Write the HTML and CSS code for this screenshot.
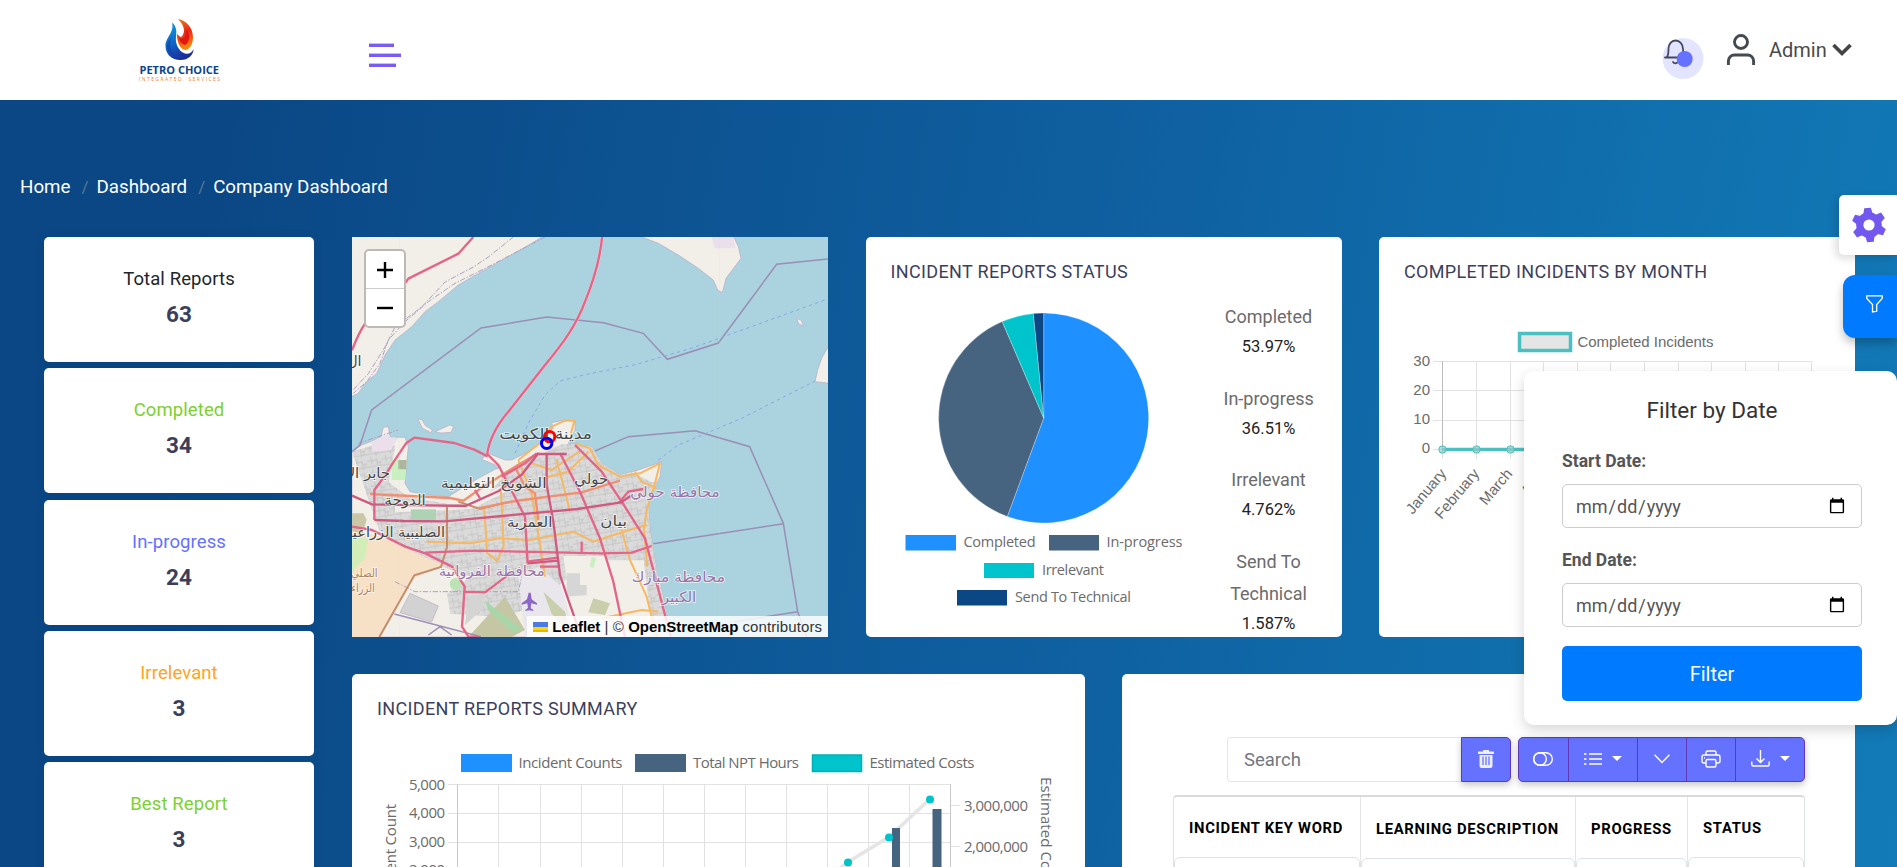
FILE: index.html
```html
<!DOCTYPE html>
<html lang="en">
<head>
<meta charset="utf-8">
<title>Company Dashboard</title>
<link rel="stylesheet" href="styles.css">
</head>
<body>
<header class="topbar">
  <div class="brand">
    <svg width="90" height="72" viewBox="135 14 90 72">
      <defs>
        <linearGradient id="blue" x1="0" y1="0" x2="0.4" y2="1"><stop offset="0" stop-color="#1aa0e0"/><stop offset=".5" stop-color="#0f6fce"/><stop offset="1" stop-color="#1b2f9b"/></linearGradient>
        <linearGradient id="red" x1="0" y1="0" x2="0.2" y2="1"><stop offset="0" stop-color="#f08010"/><stop offset=".5" stop-color="#e8281a"/><stop offset="1" stop-color="#f28a0a"/></linearGradient>
      </defs>
      <path fill="url(#blue)" d="M172 22.500c4 3 5 8 4 14-1 8 3 15 9 17 4 1 7-1 8.500-4.500 0 6-5 11-13 11-9 0-15-6-15-14 0-9 9-13 6.500-23.500z"/>
      <path fill="#173fa8" opacity=".65" d="M174 32c-3 6-5 11-3 17 2 5 8 9 16 7-8 5-20 0-20-10 0-6 5-8 7-14z"/>
      <path fill="url(#red)" d="M178 19c8 1 15 9 15 18 0 7-3 12-7 13-5 0-9-6-9-16 2 2 3 3 4 3 4-3 5-10-3-18z"/>
      <path fill="#e31712" d="M186 29c5 5 4 13-1 16-3-1-5-3-6-7 5 2 7-3 7-9z"/>
      <text class="logo-name" x="139.500" y="74" textLength="79.500" lengthAdjust="spacingAndGlyphs">PETRO CHOICE</text>
      <text class="logo-sub" x="139" y="81" textLength="81">INTEGRATED&#160; SERVICES</text>
    </svg>
  </div>
  <button class="burger" aria-label="Menu"><span></span><span></span><span></span></button>
  <div class="account">
    <div class="bell">
      <svg width="42" height="42" viewBox="0 0 42 42">
        <circle cx="21" cy="21.500" r="20.500" fill="#e3e4ff"/>
        <g fill="none" stroke="#46485f" stroke-width="1.800" stroke-linecap="round"><path d="M3 20.500h20M5 20c1.500-2 1.500-4 1.500-8 0-5 3-8.500 7-8.500s7.500 3.500 7.500 8.500c0 4 .5 6 1.500 8M11 25c1 1.500 3 1.500 4.500.500"/></g>
        <circle cx="22.700" cy="22" r="8" fill="#6571ff"/>
      </svg>
    </div>
    <svg class="user" width="30" height="34" viewBox="0 0 30 34" fill="none" stroke="#454950" stroke-width="2.900"><circle cx="15" cy="9" r="6.500"/><path d="M2.400 32v-4a6 6 0 0 1 6-6h13.200a6 6 0 0 1 6 6v4"/></svg>
    <span class="admin">Admin</span>
    <svg class="caret" width="20" height="14" viewBox="0 0 20 14" fill="none" stroke="#444" stroke-width="3.600"><path d="M1.500 2l8.500 8.500L18.500 2"/></svg>
  </div>
</header>
<main class="page">
  <nav class="crumbs"><a>Home</a><i>/</i><a>Dashboard</a><i>/</i><a>Company Dashboard</a></nav>
  <div class="board">
    <section class="stats">
      <div class="stat"><span class="dark">Total Reports</span><b>63</b></div>
      <div class="stat"><span class="green">Completed</span><b>34</b></div>
      <div class="stat"><span class="violet">In-progress</span><b>24</b></div>
      <div class="stat"><span class="orange">Irrelevant</span><b>3</b></div>
      <div class="stat"><span class="green">Best Report</span><b>3</b></div>
    </section>
    <div class="content">
      <div class="row">
        <section class="map">
          <svg class="tiles" width="476" height="400" viewBox="21 21 1428 1200">
            <defs>
              <pattern id="streets" width="44" height="38" patternUnits="userSpaceOnUse" patternTransform="rotate(-9)"><path d="M0 12h30M14 0v24M30 6v32M0 30h44M30 19h14M38 19v11" fill="none" stroke="#bdbdbd" stroke-width="2"/></pattern>
              <path id="land" d="M21 665L50 645 85 632 108 620 115 592 130 590 135 622 180 622 190 650 185 700 180 760 195 785 250 795 310 800 350 775 400 745 450 718 468 712 410 688 430 670 480 690 500 690 550 665 585 640 600 610 625 595 620 578 660 570 690 572 690 600 670 640 740 650 770 700 825 735 880 720 950 695 945 740 925 780 910 830 915 900 925 960 935 1020 950 1080 978 1221H21z"/>
              <path id="urban" d="M21 665l90-28 40 10-20 110 60 45 120 20h90l90-100 100-50 60-30h120l60 70 90 45 115-28-25 80-15 60 10 110 20 110 40 152h-140l-30-250-150 0-100 70-30 40-80 40-60 20-160-10-10-60 70-50-190-70-80-60z"/>
              <clipPath id="landclip"><use href="#land"/></clipPath>
            </defs>
            <rect x="21" y="21" width="1428" height="1200" fill="#aad3df"/>
            <g fill="#f2efe9" stroke="#b9a9c2" stroke-width="2">
              <path d="M15 15H600L560 40 490 80 400 130 340 165 280 215 240 245 200 290 150 330 120 375 95 430 60 460 40 490 15 502z"/>
              <path d="M875 15L940 40 1000 75 1060 115 1105 150 1118 180 1132 188 1143 145 1188 85 1180 50 1163 15z"/>
              <path d="M1455 340L1430 385 1418 420 1410 455 1455 460z"/>
              <path d="M1355 265l14 6 6 18-14-8z"/>
              <path d="M218 566l14 4 8 16 22 14-4 8-26-14zM270 605l44-20 12 4-8 18-30 2z"/>
              <use href="#land"/>
            </g>
            <path d="M1100 21h64l8 34h-64z" fill="#eadfea"/>
            <g clip-path="url(#landclip)">
              <use href="#urban" fill="#dadada"/>
              <use href="#urban" fill="url(#streets)"/>
              <path d="M150 815l200 12 120-60 10 20-100 50-230 10z" fill="#f2efe9"/>
              <path d="M370 1100l50-10-10 50-50 45z" fill="#d4d4d4"/>
              <path d="M21 900l85 20 130 60 60 25-90 40-105 176H21z" fill="#f7e1c6"/>
              <path d="M21 925h50l-12 60-38 40z" fill="#d3edb8"/>
              <path d="M21 850h34l10 20-12 40-32-6z" fill="#c9c7a6"/>
              <path d="M78 630l50-15 30 10-20 35-55 5z" fill="#eadfea"/>
              <path d="M140 690h45v60h-45z" fill="#c9f0c0"/><path d="M160 690h25v28h-25z" fill="#aab69d"/>
              <path d="M198 838h75v38h-75z" fill="#aed2b4"/>
              <path d="M655 978h130l44 243H690z" fill="#f2efe9"/>
              <path d="M520 1040l60-30 70 60 40 151h-150z" fill="#e9e7eb"/>
              <path d="M665 1030h40v35h20v30l-60 5z" fill="#d6d6d6"/><path d="M745 1105l50 15-15 35-50-8z" fill="#c9ceac"/><path d="M595 1085l65 60 20 76-60-70z" fill="#c9ceac"/>
              <path d="M480 1100l60 100-40 21H370z" fill="#c5c7a4"/><path d="M420 1112l110 85-25 12-75-68z" fill="#a9d6a8"/>
              <path d="M195 1090l85 38-20 48-95-28z" fill="#d2d2d2" stroke="#b9a9c2" stroke-width="2"/>
              <circle cx="332" cy="1062" r="18" fill="#bce3b4"/>
              <path d="M740 980l14 4-8 30-12-4z" fill="#c9f0c0"/>
            </g>
            <g fill="none" stroke="#aca0c2" stroke-width="3" stroke-dasharray="16 5 4 5"><path d="M505 21l-75 60-45 30-85 45-70 75-80 60-30 60-50 80-45 48M600 21L440 105 330 160 250 215 180 275 130 330 105 400 65 455 25 490"/><path d="M150 1055l60 30h310l10-45M40 640l120-40"/></g>
            <g fill="none" stroke="#9b8eb4" stroke-width="4.500"><path d="M21 665L45 645 80 540 408 294 605 261 775 278 895 310 967 388 1120 339 1295 103 1449 87"/><path d="M750 663L850 620 1050 602 1214 650 1315 880 1358 1145 1385 1221M925 941L1315 881M1170 1175L1358 1145M148 1152l260 68M250 1215l35-25 35 25"/></g>
            <g fill="none" stroke="#8aa7e8" stroke-width="3" stroke-dasharray="10 10"><path d="M510 670l40-90 50-85 45-42 80-20 150-30 170-50 400-145M940 690l60-45 190-80 220-112"/></g>
            <g fill="none" stroke="#f6b863" stroke-width="6" stroke-linejoin="round">
              <path d="M520 690l70-55 30-45 40-18 28 0-10 38M690 640l45 15 25 50 65 35 60-10 60-30-15 60-25 80-8 60 10 110M245 935l130 5 90-15 90 5 130-25 60 30 60-20 100-30M418 838l8 130 30 25 20-45-8-165M520 690l40 100 20 120 20 130M635 690l20 75 20 80M560 700l60 20 90-60M590 745l80-20 60-60M830 900l25 90 50 110 30 121M870 725l20 30 45 20M770 1165l120-25 50 5"/>
            </g>
            <g fill="none" stroke="#c58d69" stroke-width="6"><path d="M103 1221l105-185 80-25 18-60V830M340 815l65 22 80-20"/></g>
            <g fill="none" stroke="#ef9070" stroke-width="7"><path d="M75 792l240 12 40 8 50-35 110-70 60-35M400 835l110-22 200-26 115-35"/><path d="M510 710l30 60 30 20 10 80"/></g>
            <g fill="none" stroke="#f7c9d3" stroke-width="9"><path d="M772 15C768 60 757 125 720 215 695 285 650 345 600 405L490 545C450 590 430 640 427 672"/></g>
            <g fill="none" stroke="#e46587" stroke-width="7" stroke-linejoin="round">
              <path d="M772 15C768 60 757 125 720 215 695 285 650 345 600 405L490 545C450 590 430 640 427 672L460 705 540 860 548 1000M385 21l-45 50-150 75-60 85-70 50q-20 30-39 80"/>
              <path d="M88 870V780l30-40 25-40 40-60 25-17 120 16 60 20 40 20M390 780l15 25"/>
              <path d="M21 890l60 10 100 50 60 20 80 40 38 60-8 120 20 31h30M240 968l150-6 380 8 90-2 60-20M545 995l95-12M360 1085l60 2 80-60M585 1010h55"/>
              <path d="M690 645l80 80 60 90 70 110 60 230 18 66M645 670l60 115 60 140 40 130 35 166M820 820l30-35 45-8M710 935v35"/>
              <path d="M470 740l70-40 35-30"/>
            </g>
            <g fill="none" stroke="#cf5a80" stroke-width="7"><path d="M21 797l60 26 280 5 100-45 70-50 50-65M88 870l90 3 120 1 400-37 130-20 30-20M605 675v90l20 110 20 160 20 60 35 100M575 672h90M548 1000l90-8"/></g>
            <g fill="none" stroke="#d3d3d3" stroke-width="1" opacity=".5"><path d="M163 21v1200M1123 21v1200"/></g>
            <path fill="#8c67c7" d="M551 1088l6 0 3 20 16 12v4l-17-4-2 14 8 6v3l-12-2-12 2v-3l8-6-2-14-17 4v-4l16-12z"/>
            <g class="places" text-anchor="middle">
              <text x="602" y="628" font-size="44" textLength="278" lengthAdjust="spacingAndGlyphs">مدينة الكويت</text>
              <text x="446" y="773" font-size="43" textLength="318" lengthAdjust="spacingAndGlyphs">الشويخ التعليمية</text>
              <text x="739" y="763" font-size="43" textLength="102" lengthAdjust="spacingAndGlyphs">حولي</text>
              <text x="180" y="826" font-size="43" textLength="124" lengthAdjust="spacingAndGlyphs">الدوحة</text>
              <text x="554" y="890" font-size="43" textLength="136" lengthAdjust="spacingAndGlyphs">العمرية</text>
              <text x="806" y="888" font-size="43" textLength="80" lengthAdjust="spacingAndGlyphs">بيان</text>
              <text x="150" y="922" font-size="43" textLength="300" lengthAdjust="spacingAndGlyphs">الصليبية الزراعية</text>
              <text x="70" y="745" font-size="43" textLength="130" lengthAdjust="spacingAndGlyphs">جابر الأ</text>
              <text x="28" y="408" font-size="43">ال</text>
              <g class="region"><text x="990" y="802" font-size="43" textLength="268" lengthAdjust="spacingAndGlyphs">محافظة حولي</text><text x="440" y="1038" font-size="43" textLength="318" lengthAdjust="spacingAndGlyphs">محافظة الفروانية</text><text x="1000" y="1056" font-size="43" textLength="280" lengthAdjust="spacingAndGlyphs">محافظة مبارك</text><text x="1002" y="1116" font-size="43" textLength="104" lengthAdjust="spacingAndGlyphs">الكبير</text></g>
              <g class="farm"><text x="58" y="1042" font-size="36" textLength="80" lengthAdjust="spacingAndGlyphs">الصلي</text><text x="54" y="1087" font-size="36" textLength="70" lengthAdjust="spacingAndGlyphs">الزراء</text></g>
            </g>
            <circle cx="614" cy="620" r="15.500" fill="none" stroke="red" stroke-width="9"/>
            <circle cx="605" cy="640" r="15.500" fill="none" stroke="#0000f0" stroke-width="9"/>
          </svg>
          <div class="zoomer"><span><svg width="16" height="16" viewBox="0 0 16 16"><path d="M0 8h16M8 0v16"/></svg></span><span><svg width="16" height="16" viewBox="0 0 16 16"><path d="M0 8h16"/></svg></span></div>
          <div class="credit"><svg width="15" height="10" viewBox="0 0 15 10"><path fill="#4c7be1" d="M0 0h15v5H0z"/><path fill="#ffd500" d="M0 5h15v3H0z"/><path fill="#e0bc00" d="M0 8h15v2H0z"/></svg> <b>Leaflet</b> | © <b>OpenStreetMap</b> contributors</div>
        </section>
        <section class="card">
          <h2>INCIDENT REPORTS STATUS</h2>
          <div class="pie">
            <svg width="330" height="320" viewBox="880 305 330 320">
              <g stroke="#fff" stroke-opacity=".35" stroke-width=".8">
                <path fill="#1e90ff" d="M1043.700 418V313A105 105 0 1 1 1007.300 516.500z"/>
                <path fill="#46637f" d="M1043.700 418L1007.300 516.500A105 105 0 0 1 1002.200 321.500z"/>
                <path fill="#00c4cc" d="M1043.700 418L1002.200 321.500A105 105 0 0 1 1033.400 313.500z"/>
                <path fill="#0b4785" d="M1043.700 418L1033.400 313.500A105 105 0 0 1 1043.700 313z"/>
              </g>
              <path fill="#1e90ff" d="M905.500 535h50.500v15.500h-50.500z"/><path fill="#46637f" d="M1049 535h50v15.500h-50z"/><path fill="#00c4cc" d="M984 563h50v15h-50z"/><path fill="#0b4785" d="M957 590h50v15.500h-50z"/>
              <g class="segoe"><text x="963.500" y="547" textLength="72">Completed</text><text x="1106.500" y="547" textLength="76">In-progress</text><text x="1042" y="575" textLength="62">Irrelevant</text><text x="1015" y="602" textLength="116">Send To Technical</text></g>
            </svg>
            <dl class="shares">
              <dt>Completed</dt><dd>53.97%</dd>
              <dt>In-progress</dt><dd>36.51%</dd>
              <dt>Irrelevant</dt><dd>4.762%</dd>
              <dt>Send To<br>Technical</dt><dd>1.587%</dd>
            </dl>
          </div>
        </section>
        <section class="card">
          <h2>COMPLETED INCIDENTS BY MONTH</h2>
          <svg class="monthly" width="476" height="230" viewBox="1379 305 476 230">
            <rect x="1519.500" y="333.500" width="51" height="17" fill="#e5e5e5" stroke="#4bc0c0" stroke-width="3.500"/>
            <text x="1577.500" y="346.500" textLength="136">Completed Incidents</text>
            <path fill="none" stroke="#e2e2e2" stroke-width="1" d="M1433 361.500h379M1433 390.500h379M1433 420.500h379M1433 449.500h379M1442.500 449v10M1476.500 361v98M1510.500 361v98M1543.500 361v98M1577.500 361v98M1610.500 361v98M1644.500 361v98M1678.500 361v98M1711.500 361v98M1745.500 361v98M1778.500 361v98M1811.500 361v98"/>
            <path stroke="#bbb" d="M1442.500 361v88"/>
            <path stroke="#4bc0c0" stroke-width="3.500" d="M1442 449.500h120"/>
            <g fill="#9cc" fill-opacity=".7" stroke="#4bc0c0"><circle cx="1442.500" cy="449.500" r="3.700"/><circle cx="1476.500" cy="449.500" r="3.700"/><circle cx="1510.500" cy="449.500" r="3.700"/></g>
            <g text-anchor="end"><text x="1430" y="366">30</text><text x="1430" y="395">20</text><text x="1430" y="424">10</text><text x="1430" y="453">0</text>
            <text transform="translate(1447 474) rotate(-50)">January</text><text transform="translate(1480 474) rotate(-50)">February</text><text transform="translate(1513 474) rotate(-50)">March</text><text transform="translate(1547 474) rotate(-50)">April</text></g>
          </svg>
        </section>
      </div>
      <div class="row lower">
        <section class="card">
          <h2>INCIDENT REPORTS SUMMARY</h2>
          <svg class="summary" width="733" height="125" viewBox="352 742 733 125">
            <path fill="#1e90ff" d="M461 754h51v18h-51z"/><path fill="#46637f" d="M635 754h51v18h-51z"/>
            <path fill="#00c4cc" stroke="#00b0b8" stroke-width="1.500" d="M812.500 755h49v16.500h-49z"/>
            <g class="segoe big"><text x="518.500" y="768" textLength="104">Incident Counts</text><text x="693" y="768" textLength="106">Total NPT Hours</text><text x="869.500" y="768" textLength="105">Estimated Costs</text></g>
            <path fill="none" stroke="#e2e2e2" d="M448 784.500h503M448 813.500h503M448 842.500h503M498.500 784v90M540.500 784v90M581.500 784v90M622.500 784v90M663.500 784v90M704.500 784v90M745.500 784v90M786.500 784v90M827.500 784v90M868.500 784v90M909.500 784v90M951 805.500h9M951 846.500h9"/>
            <path stroke="#c9c9c9" d="M457.500 784v90M950.500 784v90"/>
            <path fill="none" stroke="#e5e5e5" stroke-width="3.500" d="M800 900L848 862 889 837 930 799"/>
            <path fill="#46637f" d="M892 828h8v50h-8zM932.500 809h9v70h-9z"/>
            <g fill="#00c4cc"><circle cx="848" cy="862.500" r="4"/><circle cx="889" cy="837.500" r="4"/><circle cx="930" cy="799.500" r="4"/></g>
            <g class="segoe big"><text x="409" y="790" textLength="36">5,000</text><text x="409" y="818" textLength="36">4,000</text><text x="409" y="847" textLength="36">3,000</text><text x="409" y="875" textLength="36">2,000</text><text x="964" y="811" textLength="64">3,000,000</text><text x="964" y="852" textLength="64">2,000,000</text>
            <text transform="translate(396 904) rotate(-90)" textLength="100">Incident Count</text><text transform="translate(1041 777) rotate(90)" textLength="113">Estimated Costs</text></g>
          </svg>
        </section>
        <section class="card table-card">
          <div class="tools">
            <div class="search">Search</div>
            <div class="btns trash"><span class="b50"><svg width="16" height="18" viewBox="0 0 16 18" fill="#eef"><path d="M5 0h6v1.500h5V4H0V1.500h5z"/><path d="M1.500 5h13V16q0 2-2 2h-9q-2 0-2-2z"/><path stroke="#6571ff" stroke-width="1.300" d="M5 6.500v8.500M8 6.500v8.500M11 6.500v8.500"/></svg></span></div>
            <div class="btns group">
              <span class="b49"><svg width="20" height="14" viewBox="0 0 20 14"><rect x=".7" y=".7" width="18.600" height="12.600" rx="6.300"/><circle cx="7" cy="7" r="6.300"/></svg></span>
              <span class="b69"><svg width="18" height="14" viewBox="0 0 18 14"><path d="M5 2h13M5 7h13M5 12h13M0 2h2.500M0 7h2.500M0 12h2.500"/></svg><i></i></span>
              <span class="b50"><svg width="16" height="10" viewBox="0 0 16 10"><path d="M.5.700L8 8.500 15.500.700"/></svg></span>
              <span class="b49"><svg width="20" height="18" viewBox="0 0 20 18"><path d="M5 5V2.500q0-1.500 1.500-1.500h7Q15 1 15 2.500V5M5 13H3q-2 0-2-2V7q0-2 2-2h14q2 0 2 2v4q0 2-2 2h-2M3 8h1"/><rect x="5" y="9.500" width="10" height="7.500" rx="1.500"/></svg></span>
              <span class="b69"><svg width="19" height="17" viewBox="0 0 19 17"><path d="M9.500 0v12.500M5.500 8.500l4 4 4-4M.8 11.500v3q0 1.500 1.500 1.500h14.400q1.500 0 1.500-1.500v-3"/></svg><i></i></span>
            </div>
          </div>
          <div class="grid">
            <div class="col c1"><b>INCIDENT KEY WORD</b><div></div></div>
            <div class="col c2"><b>LEARNING DESCRIPTION</b><div></div></div>
            <div class="col c3"><b>PROGRESS</b><div></div></div>
            <div class="col c4"><b>STATUS</b><div></div></div>
          </div>
        </section>
      </div>
    </div>
  </div>
</main>
<button class="gear" aria-label="Settings"><svg width="36" height="36" viewBox="-18 -18 36 36"><g fill="#7358f0" transform="rotate(-5)"><circle r="12.800"/><path id="tooth" d="M-4.600-11.500L-3.300-17h6.600l1.300 5.500z"/><use href="#tooth" transform="rotate(60)"/><use href="#tooth" transform="rotate(120)"/><use href="#tooth" transform="rotate(180)"/><use href="#tooth" transform="rotate(240)"/><use href="#tooth" transform="rotate(300)"/></g><circle r="5.600" fill="#fff"/></svg></button>
<button class="funnel" aria-label="Filter"><svg width="17" height="18" viewBox="0 0 17 18" fill="none" stroke="#fff" stroke-width="1.300"><path d="M.8.900h15.400v2.600L10.700 9.500v6.800l-4.200 .7V9.500L.8 3.500z"/></svg></button>
<form class="filter">
  <h3>Filter by Date</h3>
  <label>Start Date:</label><input type="date">
  <label>End Date:</label><input type="date">
  <button type="button">Filter</button>
</form>
</body>
</html>
```
FILE: styles.css
```css
* { box-sizing: border-box; }
html, body { height: 867px; overflow: hidden; }
body { margin: 0; position: relative; font-family: Roboto, "Liberation Sans", sans-serif; color: #3b3f5c; background: linear-gradient(100deg, #0b4785 12%, #0f60a0 57%, #127bb8 100%); }
button { border: 0; padding: 0; background: none; font-family: inherit; }
.topbar { height: 100px; background: #fff; display: flex; align-items: flex-start; }
.brand { width: 369px; padding: 14px 0 0 135px; }
.logo-name { font: 700 10.500px "Open Sans", sans-serif; fill: #0b4490; }
.logo-sub { font: 5px "Open Sans", sans-serif; fill: #f08030; }
.burger { display: flex; flex-direction: column; align-items: flex-start; gap: 6px; margin-top: 43px; }
.burger span { height: 4px; width: 25px; background: #7a5cf2; border-top: 1px solid #c8bcfa; }
.burger span:nth-child(2) { width: 32px; }
.burger span:nth-child(3) { width: 27px; }
.account { margin-left: auto; display: flex; align-items: flex-start; padding-right: 45px; }
.bell { margin-top: 37px; height: 42px; }
.user { margin: 33px 0 0 22px; }
.admin { font-size: 20px; color: #4a4a4a; line-height: 24px; margin: 38px 5px 0 13px; width: 58px; white-space: nowrap; }
.caret { margin-top: 43px; }
.page { height: 767px; overflow: hidden; }
.crumbs { display: flex; gap: 11px; height: 137px; padding: 73px 0 0 20px; font-size: 18.750px; line-height: 28px; color: #fff; white-space: nowrap; }
.crumbs i { font-style: normal; color: #58768f; font-size: 17px; width: 4px; }
.board { display: flex; gap: 38px; padding-left: 44px; }
.stats { width: 270px; display: flex; flex-direction: column; gap: 6.300px; }
.stat { height: 125px; flex: none; background: #fff; border-radius: 5px; display: flex; flex-direction: column; align-items: center; padding-top: 30px; box-shadow: 0 0 10px rgba(20, 50, 90, .1); }
.stat span { font-size: 18.500px; line-height: 25px; letter-spacing: .1px; }
.stat b { font-size: 22.500px; line-height: 30px; margin-top: 7px; font-weight: 700; }
.dark { color: #212529; }
.green { color: #7bd12f; }
.violet { color: #6571ff; }
.orange { color: #ffa41e; }
.content { width: 1503px; }
.row { display: grid; grid-template-columns: repeat(3, 476px); column-gap: 37.500px; height: 400px; }
.lower { grid-template-columns: repeat(2, 733px); column-gap: 37px; margin-top: 37px; height: 193px; }
.lower .card { border-radius: 5px 5px 0 0; }
.card { background: #fff; border-radius: 5px; overflow: hidden; }
.card h2 { margin: 22px 0 0 25px; font-size: 18px; line-height: 26px; font-weight: 400; white-space: nowrap; letter-spacing: .35px; }
.map { position: relative; overflow: hidden; }
.tiles { display: block; }
.places { font-family: "DejaVu Sans", sans-serif; fill: #454545; stroke: #fff; stroke-opacity: .7; stroke-width: 5px; paint-order: stroke; }
.region { fill: #9872a6; }
.farm { fill: #a9825d; }
.zoomer { position: absolute; left: 12px; top: 12px; width: 42px; border: 2px solid #bdbab6; border-radius: 5px; background: #fff; }
.zoomer span { height: 37px; display: flex; align-items: center; justify-content: center; }
.zoomer span + span { height: 38px; border-top: 1px solid #ccc; }
.zoomer path { stroke: #000; stroke-width: 2.400; }
.credit { position: absolute; right: 0; bottom: 0; height: 21px; width: 301px; padding-left: 6px; background: rgba(255, 255, 255, .82); font: 15px/21px "Liberation Sans", sans-serif; letter-spacing: .1px; color: #333; white-space: nowrap; }
.credit b { color: #000; font-weight: 700; letter-spacing: -.06px; }
.pie { display: flex; padding-left: 14px; margin-top: 20px; }
.shares { width: 90px; margin: -4px 0 0 14px; text-align: center; }
.shares dt { font-size: 18px; line-height: 32px; color: #6b6b6b; white-space: nowrap; }
.shares dd { margin: 0 0 22.500px; font-size: 16.500px; line-height: 27px; color: #222; }
.monthly, .summary { display: block; margin-top: 20px; font: 15px "Liberation Sans", sans-serif; fill: #6b6b6b; }
.segoe { font: 14.500px "Open Sans", "Noto Sans", sans-serif; fill: #6b6b6b; }
.big { font-size: 15px; }
.table-card { padding: 63px 50px 0 51px; }
.tools { display: flex; height: 45px; padding-left: 54px; }
.search { width: 234px; border: 1px solid #e5e6e8; border-right: 0; border-radius: 4px 0 0 4px; padding-left: 16px; font-size: 18.500px; line-height: 44px; color: #727880; }
.btns { display: flex; background: #6571ff; border: 1px solid #6139b8; border-radius: 5px; box-shadow: 0 3px 7px rgba(0, 0, 0, .22); }
.trash { width: 50px; border-radius: 0 5px 5px 0; }
.group { width: 287px; margin-left: 7px; }
.btns span { display: flex; align-items: center; justify-content: center; gap: 10px; padding-bottom: 2px; border-left: 1px solid #6139b8; }
.btns span:first-child { border-left: 0; }
.b49 { width: 49px; }
.b50 { width: 50px; }
.b69 { width: 69px; }
.group svg { fill: none; stroke: #fff; stroke-width: 1.400; }
.btns i { border: 5px solid transparent; border-top-color: #fff; border-bottom: 0; }
.grid { display: grid; grid-template-columns: 186px 215px 112px 117px; margin-top: 13px; height: 200px; border: 1px solid #dee2e6; border-top: 2px solid #d8dadc; border-radius: 4px; }
.col { border-left: 1px solid #e5e5e5; display: flex; flex-direction: column; }
.col:first-child { border-left: 0; }
.col b { height: 60px; line-height: 62px; padding-left: 15px; font-size: 14.800px; color: #000; white-space: nowrap; letter-spacing: .7px; }
.col div { flex: 1; border: 1px solid #dee2e6; border-radius: 6px; }
.c2 b, .c3 b { height: 61px; line-height: 64px; }
.gear { position: absolute; right: 0; top: 195px; width: 58px; height: 60px; padding-left: 2px; background: #fff; border-radius: 5px 0 0 5px; box-shadow: -3px 3px 10px rgba(0, 0, 0, .15); display: flex; align-items: center; justify-content: center; }
.funnel { position: absolute; right: 0; top: 275px; width: 54px; height: 63px; padding: 0 0 2px 8px; background: #007bff; border-radius: 12px 0 0 12px; box-shadow: 0 5px 10px rgba(0, 0, 0, .25); }
.filter { position: absolute; right: 0; top: 371px; width: 373px; height: 354px; padding: 24px 35px 0 38px; background: #fff; border-radius: 10px; box-shadow: 0 5px 14px rgba(0, 0, 0, .16); display: flex; flex-direction: column; }
.filter h3 { margin: 0 0 23px; font-size: 22.500px; line-height: 30px; font-weight: 400; text-align: center; color: #333; }
.filter label { font-size: 17.500px; line-height: 26px; font-weight: 700; color: #555; margin-bottom: 10px; }
.filter input { height: 44px; margin: 0 0 19px; padding: 0 13px 0 12px; border: 1px solid #ccc; border-radius: 5px; font: 18px Roboto, sans-serif; color: #555; background: #fff; }
.filter button { height: 55px; border-radius: 5px; background: #007bff; color: #fff; font-size: 20px; }
```
